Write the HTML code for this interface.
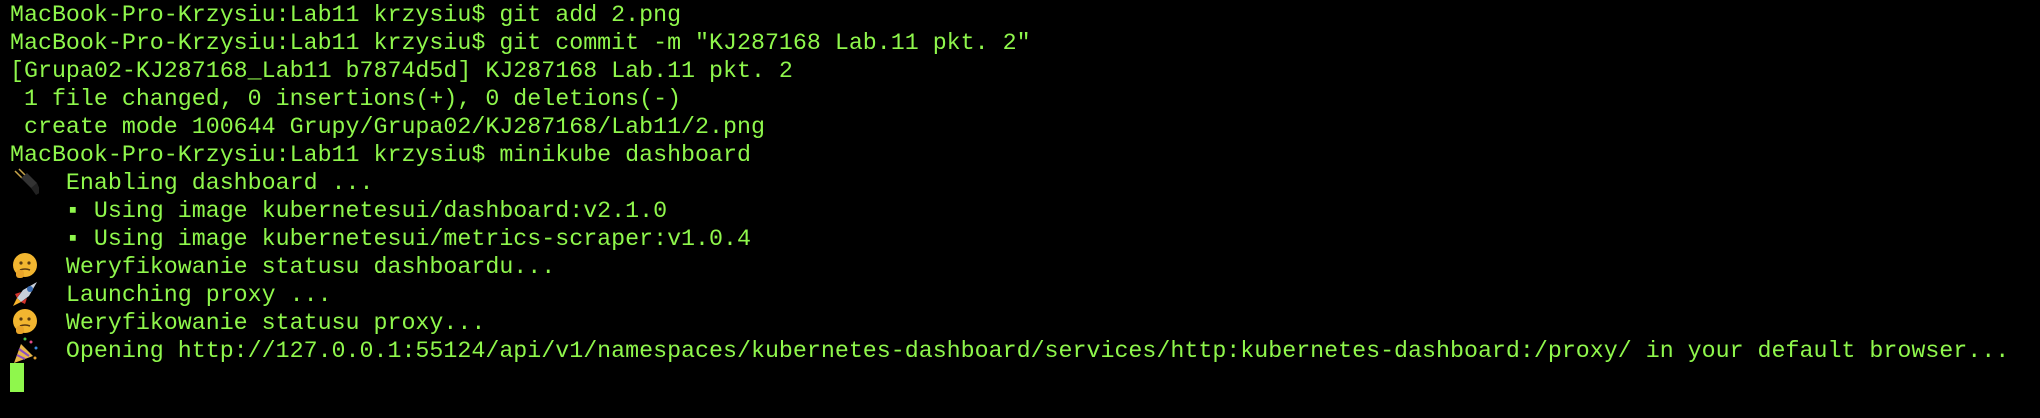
<!DOCTYPE html>
<html><head><meta charset="utf-8"><style>
html,body{margin:0;padding:0;background:#000;width:2040px;height:418px;overflow:hidden}
.t{position:absolute;left:10px;top:1px;font-family:"Liberation Mono","DejaVu Sans Mono",monospace;font-size:23.3px;line-height:28px;color:#8ff74c;white-space:pre}
.e{position:absolute;left:11px;width:28px;height:28px}
.cur{position:absolute;left:10px;top:363px;width:14px;height:29px;background:#8ff74c}
</style></head><body>
<div class="t">MacBook-Pro-Krzysiu:Lab11 krzysiu$ git add 2.png
MacBook-Pro-Krzysiu:Lab11 krzysiu$ git commit -m "KJ287168 Lab.11 pkt. 2"
[Grupa02-KJ287168_Lab11 b7874d5d] KJ287168 Lab.11 pkt. 2
 1 file changed, 0 insertions(+), 0 deletions(-)
 create mode 100644 Grupy/Grupa02/KJ287168/Lab11/2.png
MacBook-Pro-Krzysiu:Lab11 krzysiu$ minikube dashboard
    Enabling dashboard ...
    ▪ Using image kubernetesui/dashboard:v2.1.0
    ▪ Using image kubernetesui/metrics-scraper:v1.0.4
    Weryfikowanie statusu dashboardu...
    Launching proxy ...
    Weryfikowanie statusu proxy...
    Opening http://127.0.0.1:55124/api/v1/namespaces/kubernetes-dashboard/services/http:kubernetes-dashboard:/proxy/ in your default browser...</div>
<svg class="e" style="top:168px" viewBox="0 0 28 28"><path d="M4 3 L11 10 M8 1 L15 8" stroke="#c9a64a" stroke-width="1.5"/><path d="M10 10 L16 5 L26 15 L21 21 Z" fill="#333"/><path d="M20 20 L26 15 L30 24 L25 27 Z" fill="#222"/></svg>
<svg class="e" style="top:252px" viewBox="0 0 28 28"><circle cx="14" cy="13" r="12" fill="#f2b630"/><circle cx="10" cy="11" r="1.6" fill="#5a3a10"/><circle cx="18" cy="11" r="1.6" fill="#5a3a10"/><path d="M9 18 Q14 16 19 18" stroke="#5a3a10" stroke-width="1.5" fill="none"/><rect x="5" y="18" width="8" height="8" rx="3" fill="#e9a52a"/></svg>
<svg class="e" style="top:280px" viewBox="0 0 28 28"><path d="M26 2 L12 10 L6 18 L10 22 L18 16 Z" fill="#c8d0da"/><circle cx="19" cy="9" r="3" fill="#3a6bb0"/><path d="M6 18 L2 26 L10 22 Z" fill="#f6b22a"/><path d="M10 12 L4 14 L6 18 Z M16 18 L14 24 L10 22 Z" fill="#d3322b"/></svg>
<svg class="e" style="top:308px" viewBox="0 0 28 28"><circle cx="14" cy="13" r="12" fill="#f2b630"/><circle cx="10" cy="11" r="1.6" fill="#5a3a10"/><circle cx="18" cy="11" r="1.6" fill="#5a3a10"/><path d="M9 18 Q14 16 19 18" stroke="#5a3a10" stroke-width="1.5" fill="none"/><rect x="5" y="18" width="8" height="8" rx="3" fill="#e9a52a"/></svg>
<svg class="e" style="top:336px" viewBox="0 0 28 28"><path d="M3 27 L10 8 L22 20 Z" fill="#e8b84a"/><path d="M6 19 L14 23 M8 13 L18 20" stroke="#8a4fc0" stroke-width="2"/><circle cx="20" cy="6" r="1.5" fill="#e04a8a"/><circle cx="25" cy="12" r="1.5" fill="#3a8ae0"/><circle cx="14" cy="3" r="1.5" fill="#4ac04a"/><circle cx="24" cy="22" r="1.5" fill="#e0a030"/></svg>
<div class="cur"></div>
</body></html>
